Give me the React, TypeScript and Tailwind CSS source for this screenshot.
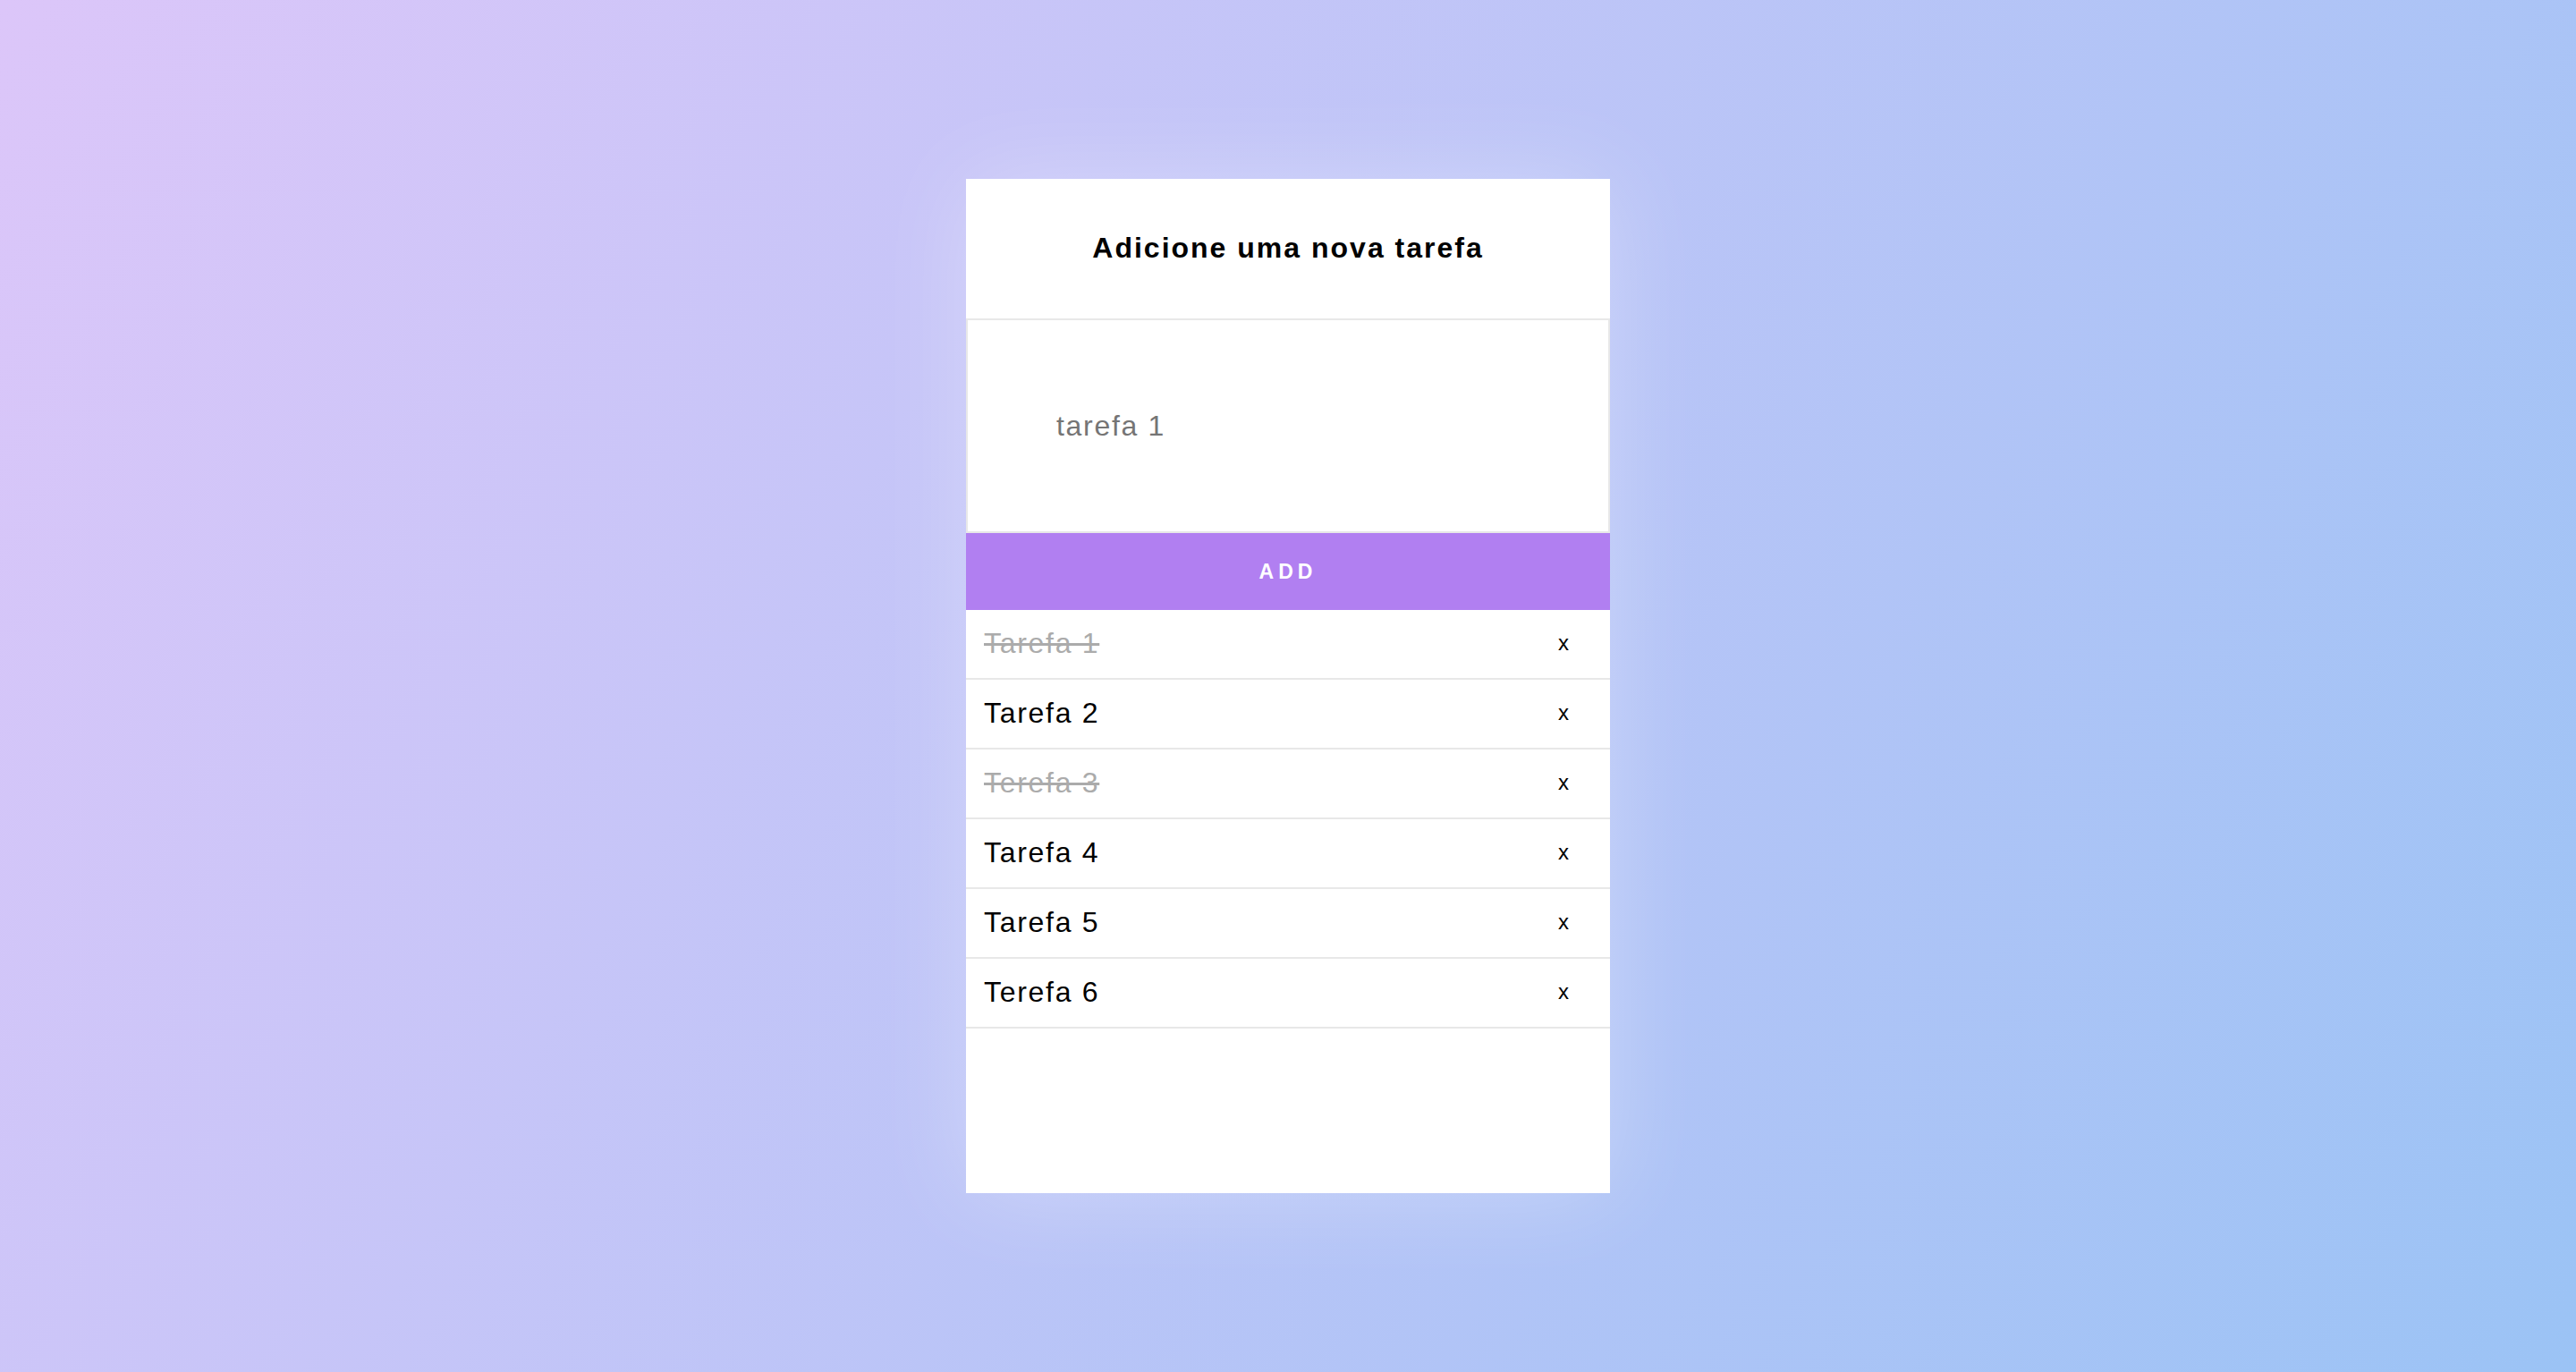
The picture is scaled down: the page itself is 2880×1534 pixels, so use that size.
import { useState } from 'react'

type Task = { id: number; title: string; done: boolean }

const initialTasks: Task[] = [
  { id: 1, title: 'Tarefa 1', done: true },
  { id: 2, title: 'Tarefa 2', done: false },
  { id: 3, title: 'Terefa 3', done: true },
  { id: 4, title: 'Tarefa 4', done: false },
  { id: 5, title: 'Tarefa 5', done: false },
  { id: 6, title: 'Terefa 6', done: false },
]

export default function App() {
  const [tasks, setTasks] = useState<Task[]>(initialTasks)
  const [text, setText] = useState('tarefa 1')

  const addTask = () => {
    if (!text.trim()) return
    setTasks([...tasks, { id: Date.now(), title: text, done: false }])
    setText('')
  }

  return (
    <div className="flex min-h-screen items-center justify-center bg-[linear-gradient(120deg,#dcc6f9,#9bc3f5)] font-['Liberation_Sans',Arial,sans-serif]">
      <div className="flex h-[1134px] w-[720px] flex-col bg-white shadow-[0_0_100px_rgba(255,255,255,0.3)]">
        <div className="flex h-[156px] items-center justify-center pb-[2px]">
          <h1 className="text-[32px] font-bold tracking-[2px] text-black">
            Adicione uma nova tarefa
          </h1>
        </div>
        <input
          className="h-[240px] w-full border-2 border-[#e8e8e8] bg-white pl-[99px] text-[32px] tracking-[1.7px] text-[#757575] outline-none"
          type="text"
          value={text}
          onChange={(e) => setText(e.target.value)}
        />
        <button
          className="h-[86px] w-full bg-[#b17ff1] text-[23px] font-bold tracking-[5px] text-white"
          type="button"
          onClick={addTask}
        >
          ADD
        </button>
        <ul className="flex-1">
          {tasks.map((task) => (
            <li
              key={task.id}
              className="flex h-[78px] items-center justify-between border-b-2 border-[#e8e8e8] pb-[2px] pl-[20px] pr-[46px]"
            >
              <span
                className={
                  task.done
                    ? 'cursor-pointer text-[32px] tracking-[1.7px] text-[#ababab] line-through'
                    : 'cursor-pointer text-[32px] tracking-[1.7px] text-black'
                }
                onClick={() =>
                  setTasks(
                    tasks.map((t) =>
                      t.id === task.id ? { ...t, done: !t.done } : t,
                    ),
                  )
                }
              >
                {task.title}
              </span>
              <button
                className="text-[24px] text-black"
                type="button"
                onClick={() => setTasks(tasks.filter((t) => t.id !== task.id))}
              >
                x
              </button>
            </li>
          ))}
        </ul>
      </div>
    </div>
  )
}
